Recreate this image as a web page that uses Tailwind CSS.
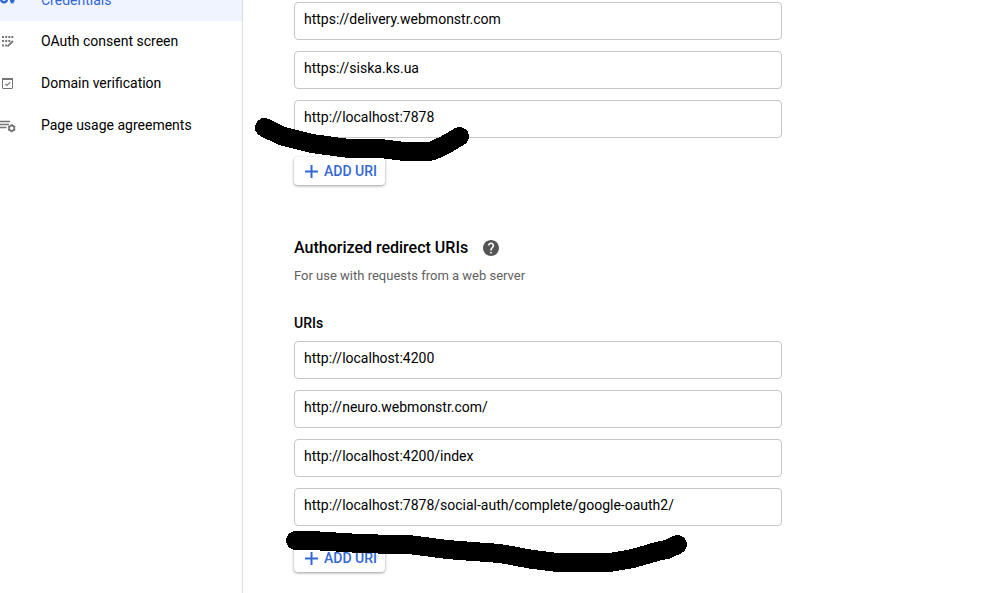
<!DOCTYPE html>
<html lang="en">
<head>
<meta charset="utf-8">
<title>Credentials</title>
<script src="https://cdn.jsdelivr.net/npm/@tailwindcss/browser@4"></script>
</head>
<body class="relative flex min-h-screen overflow-hidden bg-white font-['Roboto',sans-serif] text-sm text-black">
  <nav class="-mt-[21px] w-[243px] shrink-0 border-r border-[#dadce0]">
    <a href="#" class="flex h-[42px] items-center gap-[25px] bg-[#f0f4ff] text-[#3367d6]">
      <svg class="size-4" viewBox="0 0 16 16" fill="none" stroke="currentColor" stroke-width="2.4"><circle cx="4" cy="7.300" r="3"/><path d="M7 6.700h8"/><path d="M12.200 6v5.300" stroke-width="3"/><path d="M10 8.700h4.500" stroke-width="2"/></svg>
      <span>Credentials</span>
    </a>
    <a href="#" class="flex h-[42px] items-center gap-[25px] pb-[2px]">
      <svg class="size-4" viewBox="0 0 16 16" fill="#757575"><path d="M2 3h2v2H2zM5.200 3h2v2h-2zM8.300 3h2v2h-2zM11.300 3h2v2h-2zM2 7h2v2H2zM5.200 7h2v2h-2zM8.300 7h2v2h-2zM2 11.500h2v2H2zM5.200 11.500h1.800v2h-1.800z"/><path d="M7.500 13.300l5.500-5.300" stroke="#757575" stroke-width="1.800"/></svg>
      <span>OAuth consent screen</span>
    </a>
    <a href="#" class="flex h-[42px] items-center gap-[25px] pb-[2px]">
      <svg class="size-4" viewBox="0 0 16 16" fill="none" stroke="#757575"><rect x="2.500" y="3.500" width="10" height="10" rx=".5"/><path d="M2 4h11" stroke-width="2"/><path d="M5.300 8.800l1.700 1.700 3.200-3.400" stroke-width="1.200"/></svg>
      <span>Domain verification</span>
    </a>
    <a href="#" class="flex h-[42px] items-center gap-[25px] pb-[2px]">
      <svg class="size-4" viewBox="0 0 16 16" fill="none" stroke="#757575"><path d="M0 4.500h10M0 7.500h9M0 10.500h6.500" stroke-width="1.500"/><circle cx="11.700" cy="11.200" r="2.600" stroke-width="1.700"/><path d="M11.700 7.200v1.300M11.700 13.900v1.300M8.200 9.200l1.200.7M14 12.500l1.200.7M8.200 13.200l1.200-.7M14 9.900l1.200-.7" stroke-width="1.900"/></svg>
      <span>Page usage agreements</span>
    </a>
  </nav>

  <main class="flex-1 pl-[51px] pt-[2px]">
    <div class="max-w-[488px]">
      <div class="flex flex-col gap-[11px]">
        <input type="text" aria-label="JavaScript origin 1" value="https://delivery.webmonstr.com" class="h-[38px] w-full rounded border border-[#c6c6c6] px-[9px] pb-[5px]">
        <input type="text" aria-label="JavaScript origin 2" value="https://siska.ks.ua" class="h-[38px] w-full rounded border border-[#c6c6c6] px-[9px] pb-[5px]">
        <input type="text" aria-label="JavaScript origin 3" value="http://localhost:7878" class="h-[38px] w-full rounded border border-[#c6c6c6] px-[9px] pb-[5px]">
      </div>
      <button type="button" class="mt-[19px] flex h-7 items-center gap-[6px] rounded pl-[11px] pr-2 font-medium text-[#3367d6] shadow-[0_1px_3px_rgba(0,0,0,0.4)]">
        <svg class="size-[13px]" viewBox="0 0 13 13" stroke="currentColor" stroke-width="2"><path d="M0 6.500h13M6.500 0v13"/></svg>
        ADD URI
      </button>

      <section>
        <div class="mt-[51px] flex h-6 items-center gap-[15px]">
          <h2 class="text-base font-medium">Authorized redirect URIs</h2>
          <button type="button" aria-label="Help">
            <svg class="size-4" viewBox="2 2 20 20" fill="#555"><path d="M12 2C6.480 2 2 6.480 2 12s4.480 10 10 10 10-4.480 10-10S17.520 2 12 2zm1 17h-2v-2h2v2zm2.070-7.750l-.9.920C13.450 12.900 13 13.500 13 15h-2v-.5c0-1.100.45-2.100 1.170-2.830l1.240-1.260c.37-.36.59-.86.59-1.410 0-1.100-.9-2-2-2s-2 .9-2 2H8c0-2.210 1.790-4 4-4s4 1.790 4 4c0 .88-.36 1.680-.93 2.250z"/></svg>
          </button>
        </div>
        <p class="mt-[6px] text-[13px] leading-5 text-[#616161]">For use with requests from a web server</p>
        <h3 class="mt-[27px] font-medium leading-5">URIs</h3>
        <div class="mt-2 flex flex-col gap-[11px]">
          <input type="text" aria-label="Redirect URI 1" value="http://localhost:4200" class="h-[38px] w-full rounded border border-[#c6c6c6] px-[9px] pb-[5px]">
          <input type="text" aria-label="Redirect URI 2" value="http://neuro.webmonstr.com/" class="h-[38px] w-full rounded border border-[#c6c6c6] px-[9px] pb-[5px]">
          <input type="text" aria-label="Redirect URI 3" value="http://localhost:4200/index" class="h-[38px] w-full rounded border border-[#c6c6c6] px-[9px] pb-[5px]">
          <input type="text" aria-label="Redirect URI 4" value="http://localhost:7878/social-auth/complete/google-oauth2/" class="h-[38px] w-full rounded border border-[#c6c6c6] px-[9px] pb-[5px]">
        </div>
        <button type="button" class="mt-[18px] flex h-7 items-center gap-[6px] rounded pl-[11px] pr-2 font-medium text-[#3367d6] shadow-[0_1px_3px_rgba(0,0,0,0.4)]">
          <svg class="size-[13px]" viewBox="0 0 13 13" stroke="currentColor" stroke-width="2"><path d="M0 6.500h13M6.500 0v13"/></svg>
          ADD URI
        </button>
      </section>
    </div>
  </main>

  <!-- Marker strokes drawn over the form -->
  <svg class="pointer-events-none absolute left-0 top-0" width="700" height="580" fill="none" stroke="#000" stroke-width="19" stroke-linecap="round" stroke-linejoin="round" shape-rendering="crispEdges" aria-hidden="true">
    <path d="M264.500 127.500L282 136L312 143.500L345 148L385 149L400 151L432 151L445 145L459.500 136.500"/>
    <path d="M295.500 540.500L320 541L360 543.500L413 545L447 549.500L493 553L503 554L530 559L553 562L613 562L633 558.500L657 551.500L667 549.500L677.500 544.500"/>
  </svg>
</body>
</html>
